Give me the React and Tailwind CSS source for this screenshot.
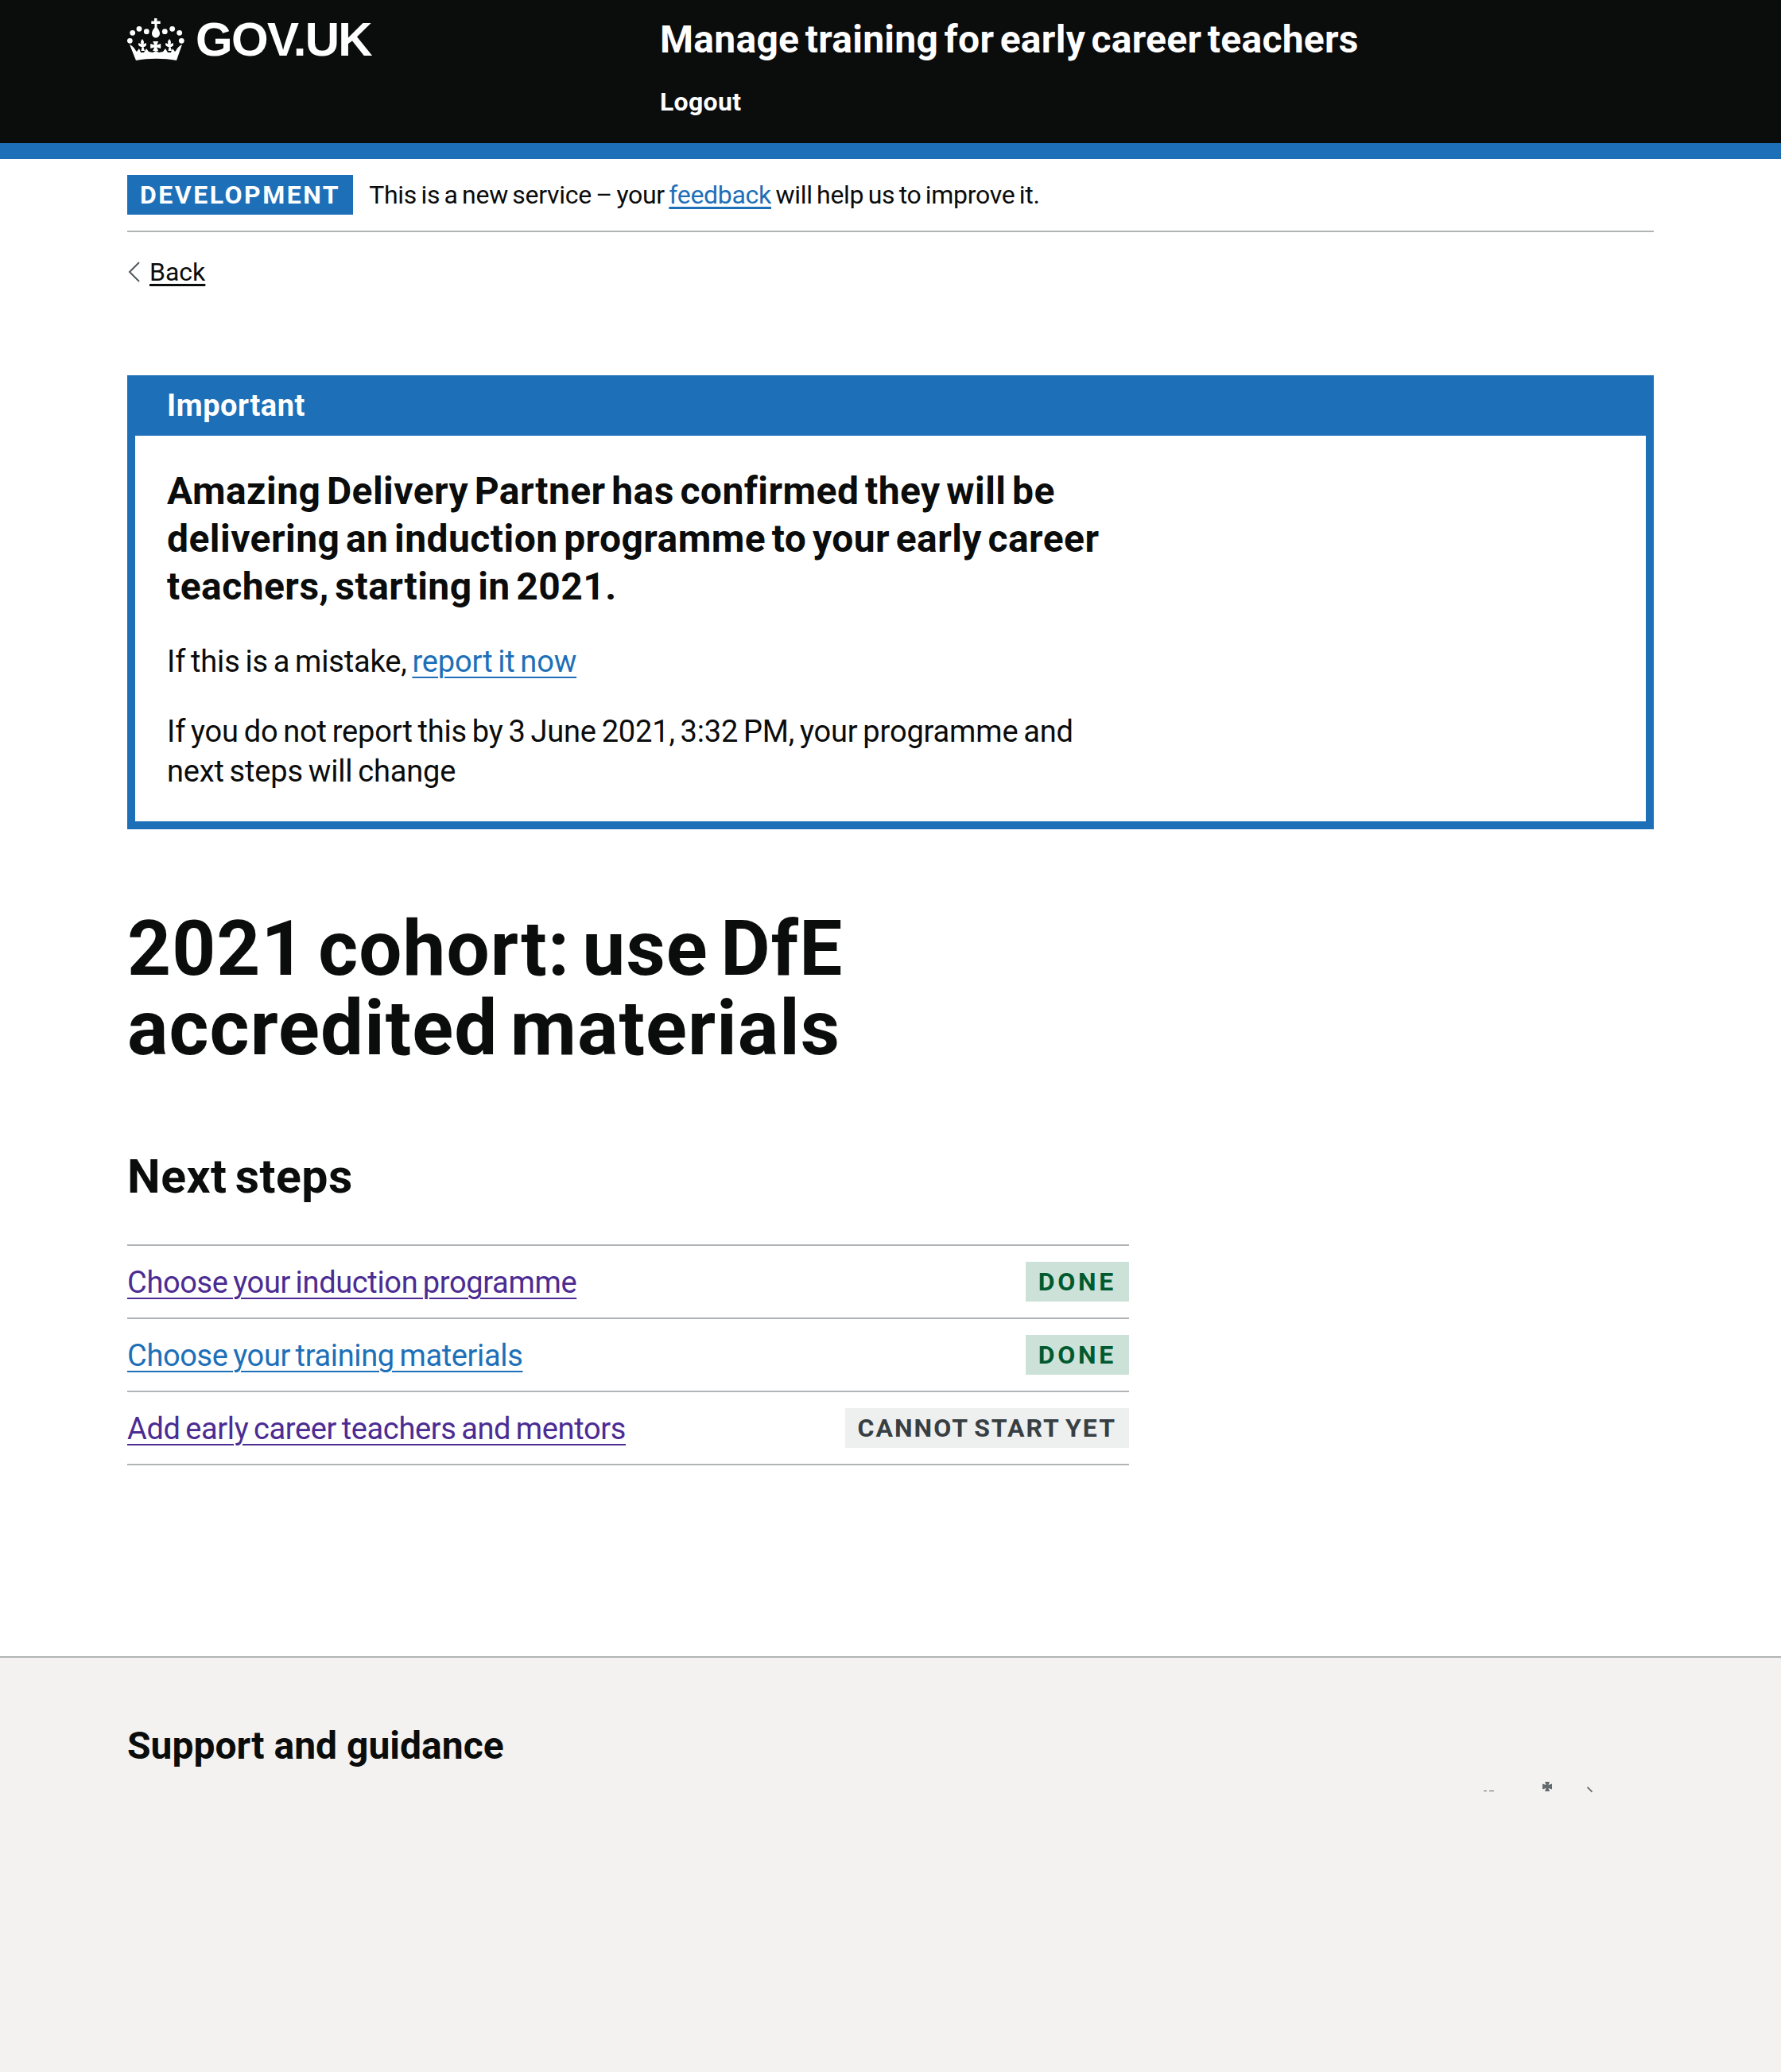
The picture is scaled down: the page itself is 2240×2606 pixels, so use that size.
import React from "react";

const FLEUR = "M0 0c2 2.5 2.5 4 1.5 6.5l3-1.5c1.5 2.5 0 5-3 5l1.5 5H-1.5L0 15h-1.5l1-5c-3 0-5.5-2.5-4-5l3 1.5C-2.5 4-2 2.5 0 0z";
const Crown = () => (
  <svg width="72" height="54" viewBox="0 0 72 54" className="shrink-0 fill-white">
    <path d="M34 0h3.5v3.5h4.2V7h-4.2v4.5c2 2.5 3.5 5 3.5 7.5 0 3-2.2 5.5-5 5.500s-5-2.500-5-5.500c0-2.500 1.500-5 3.500-7.500V7h-4.200V3.500H34z" />
    <circle cx="6.7" cy="18.3" r="3.4" /><circle cx="15" cy="13.3" r="3.4" /><circle cx="24.3" cy="16.7" r="3.4" />
    <circle cx="47.3" cy="16.7" r="3.4" /><circle cx="56.7" cy="13.3" r="3.4" /><circle cx="65.7" cy="18.3" r="3.4" />
    <circle cx="3.3" cy="28.3" r="3.4" /><circle cx="68.3" cy="28.3" r="3.4" />
    <g transform="translate(19 26)"><path d={FLEUR} /></g>
    <g transform="translate(53 26)"><path d={FLEUR} /></g>
    <g transform="translate(35.7 35)"><path d="M-3.5-6h7l-2 4.5 5-1.5v6l-5-1.5 2 4.5h-7l2-4.5-5 1.5v-6l5 1.5z" /></g>
    <path d="M3 33c3 1.5 6 4 8 8l1 1 3-4 2 5h4l3-5 3 4 5 1 4-2 4 2 5-1 3-4 3 5h4l2-5 3 4 1-1c2-4 5-6.5 8-8l-7 20c-17-3-34-3-51 0z" />
  </svg>
);

const Task = ({ label, visited, tag, grey }) => (
  <li className="flex items-center justify-between h-[92px] border-b-2 border-[#b1b4b6]">
    <a className={`mt-[1px] text-[38px] leading-[50px] tracking-[-0.35px] [word-spacing:-2.5px] underline decoration-2 underline-offset-[6px] ${visited ? "text-[#4c2c92]" : "text-[#1d70b8]"}`}>{label}</a>
    <span className={`h-[50px] px-4 flex items-center text-[32px] font-bold uppercase ${grey ? "tracking-[2px] [word-spacing:-3px] bg-[#eeefef] text-[#383f43]" : "tracking-[3.7px] bg-[#cce2d8] text-[#005a30]"}`}>{tag}</span>
  </li>
);

export default function App() {
  return (
    <div className="min-h-[2606px] flex flex-col bg-white text-[#0b0c0c] font-['Roboto',sans-serif]">
      <header className="h-[200px] bg-[#0b0c0c] border-b-[20px] border-[#1d70b8] text-white">
        <div className="mx-auto w-[1920px] flex">
          <div className="w-[670px] flex items-center gap-[14px] h-[100px]">
            <Crown />
            <span className="font-['Liberation_Sans',sans-serif] font-bold text-[60px] tracking-[-1.7px] leading-none">GOV.UK</span>
          </div>
          <div className="flex flex-col">
            <div className="h-[100px] flex items-center text-[48px] font-bold tracking-[0.27px] [word-spacing:-4.8px]">Manage training for early career teachers</div>
            <div className="text-[32px] font-bold tracking-[0.3px] leading-[40px] mt-[8px]">Logout</div>
          </div>
        </div>
      </header>

      <main className="mx-auto w-[1920px] flex-1">
        <div className="flex items-center h-[92px] pt-[20px] pb-[20px] border-b-2 border-[#b1b4b6] gap-5">
          <span className="h-[50px] px-4 flex items-center bg-[#1d70b8] text-white text-[32px] font-bold tracking-[2.5px]">DEVELOPMENT</span>
          <span className="text-[32px] tracking-[-0.3px] [word-spacing:-2.2px]">This is a new service – your <a className="text-[#1d70b8] underline underline-offset-4">feedback</a> will help us to improve it.</span>
        </div>
        <div className="flex items-center gap-[10px] mt-[30px] h-[40px] text-[32px]">
          <svg width="18" height="28" viewBox="0 0 18 28" className="stroke-[#505a5f] fill-none"><path d="M15 2 3 14l12 12" strokeWidth="2" /></svg>
          <a className="underline underline-offset-4">Back</a>
        </div>

        <section className="mt-[110px] border-[10px] border-[#1d70b8]">
          <div className="bg-[#1d70b8] text-white text-[38px] font-bold tracking-[0.55px] h-[66px] pl-[40px] pb-[9px] flex items-center">Important</div>
          <div className="pt-[40px] pb-[30px] pl-[40px] w-[1230px] h-[485px]">
            <h3 className="text-[48px] font-bold leading-[60px] tracking-[0.45px] [word-spacing:-4.8px]">Amazing Delivery Partner has confirmed they will be delivering an induction programme to your early career teachers, starting in 2021.</h3>
            <div className="text-[38px] leading-[50px] tracking-[-0.15px] [word-spacing:-2.5px]">
              <p className="mt-[39px]">If this is a mistake, <a className="text-[#1d70b8] underline decoration-2 underline-offset-[6px]">report it now</a></p>
              <p className="mt-[38px] w-[1180px]">If you do not report this by 3 June 2021, 3:32 PM, your programme and next steps will change</p>
            </div>
          </div>
        </section>

        <h1 className="text-[96px] font-bold leading-[100px] mt-[100px] w-[1260px] tracking-[1.1px] [word-spacing:-9.5px]">2021 cohort: use DfE<br />accredited materials</h1>
        <h2 className="text-[59px] font-bold leading-[70px] mt-[102px] tracking-[0.5px] [word-spacing:-5px]">Next steps</h2>
        <ul className="w-[1260px] mt-[50px] border-t-2 border-[#b1b4b6]">
          <Task label="Choose your induction programme" visited tag="Done" />
          <Task label="Choose your training materials" tag="Done" />
          <Task label="Add early career teachers and mentors" visited tag="Cannot start yet" grey />
        </ul>
      </main>

      <footer className="h-[523px] bg-[#f3f2f1] border-t-2 border-[#b1b4b6]">
        <div className="mx-auto w-[1920px] pt-[81px] flex justify-between">
          <h2 className="text-[48px] font-bold leading-[60px]">Support and guidance</h2>
          <svg width="140" height="14" viewBox="0 0 140 14" className="mt-[75px] mr-[74px] fill-[#626a6e]">
            <path d="M0 11h4v1H0zM7 11h6v1H7z" />
            <path d="M77 0h6l-1.5 4 4.5-1.5v7L81.5 8l1.5 4h-6l1.5-4L74 9.5v-7L78.5 4z" />
            <path d="M131 6l6 6-1 1.5-6-6z" />
          </svg>
        </div>
      </footer>
    </div>
  );
}
